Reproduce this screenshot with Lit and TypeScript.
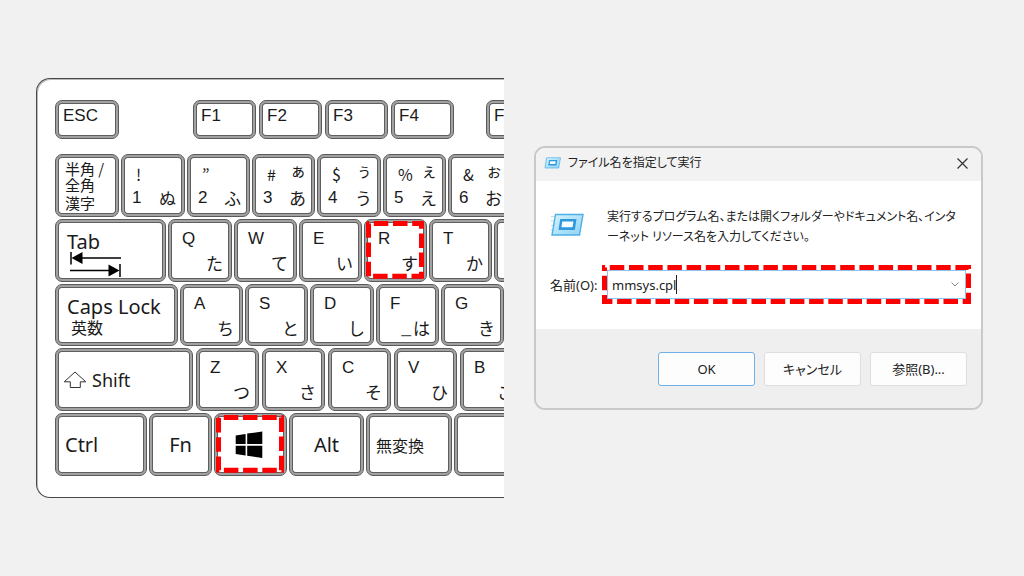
import { LitElement, html, svg, css, nothing } from "lit";
import { customElement, property, state } from "lit/decorators.js";
import { classMap } from "lit/directives/class-map.js";
import { styleMap } from "lit/directives/style-map.js";

interface Key {
  w: number;
  kind?: "space" | "fn" | "char" | "word" | "stack" | "tab" | "caps" | "shift" | "win" | "center";
  top?: string;
  topKana?: string;
  low?: string;
  kana?: string;
  marked?: boolean;
}

const gap = (w: number): Key => ({ w, kind: "space" });
const fn = (w: number, top: string): Key => ({ w, kind: "fn", top });
const num = (w: number, top: string, topKana: string, low: string, kana: string): Key => ({
  w, kind: "char", top, topKana, low, kana,
});
const letter = (w: number, top: string, kana: string, marked = false): Key => ({
  w, kind: "char", top, kana, marked,
});

const FUNCTION_ROW: Key[] = [
  fn(64, "ESC"), gap(68), fn(63, "F1"), fn(63, "F2"), fn(63, "F3"), fn(63, "F4"), gap(26), fn(63, "F5"),
];

const ROWS: { wide?: boolean; keys: Key[] }[] = [
  {
    keys: [
      { w: 64, kind: "stack" },
      num(64, "!", "", "1", "ぬ"),
      num(63, "”", "", "2", "ふ"),
      num(63, "#", "ぁ", "3", "あ"),
      num(64, "$", "ぅ", "4", "う"),
      num(63, "%", "ぇ", "5", "え"),
      num(63, "&", "ぉ", "6", "お"),
    ],
  },
  {
    keys: [
      { w: 111, kind: "tab", top: "Tab" },
      letter(64, "Q", "た"), letter(63, "W", "て"), letter(63, "E", "い"),
      letter(63, "R", "す", true), letter(63, "T", "か"), letter(63, "", ""),
    ],
  },
  {
    keys: [
      { w: 123, kind: "caps", top: "Caps Lock", low: "英数" },
      letter(63, "A", "ち"), letter(63, "S", "と"), letter(64, "D", "し"),
      { w: 63, kind: "char", top: "F", low: "_", kana: "は" },
      letter(63, "G", "き"),
    ],
  },
  {
    wide: true,
    keys: [
      { w: 138, kind: "shift", top: "Shift" },
      letter(63, "Z", "つ"), letter(63, "X", "さ"), letter(63, "C", "そ"),
      letter(63, "V", "ひ"), letter(63, "B", "こ"),
    ],
  },
  {
    keys: [
      { w: 92, kind: "word", top: "Ctrl" },
      { w: 63, kind: "center", top: "Fn" },
      { w: 73, kind: "win", marked: true },
      { w: 75, kind: "center", top: "Alt" },
      { w: 86, kind: "word", top: "無変換" },
      { w: 120, kind: "word", top: "" },
    ],
  },
];

const dashCss = css`
  .marker {
    position: absolute;
    pointer-events: none;
    overflow: visible;
  }
  .marker rect {
    x: 2.5px;
    y: 2.5px;
    width: calc(100% - 5px);
    height: calc(100% - 5px);
    fill: none;
    stroke: #ff0000;
    stroke-width: 5px;
    stroke-dasharray: 14.5 4.7;
    stroke-dashoffset: -5.3px;
  }
`;

@customElement("key-cap")
class KeyCap extends LitElement {
  @property({ attribute: false }) key!: Key;

  static styles = [
    dashCss,
    css`
      :host { display: block; flex: none; }
      .key {
        position: relative;
        display: block;
        box-sizing: border-box;
        height: 100%;
        border: 1px solid #5a5a5a;
        border-radius: 7px;
        background: #fff;
        box-shadow: inset 0 0 0 2px #a2a2a2, inset 0 0 0 3px #5f5f5f;
        color: #1a1a1a;
        font: 17px/20px "Liberation Sans", "Noto Sans CJK JP", sans-serif;
        overflow: hidden;
        white-space: nowrap;
      }
      .fn { padding: 5px 7px; }
      .char { padding: 9px 8px 0 13px; }
      .line { display: flex; justify-content: space-between; height: 20px; }
      .line + .line { margin-top: 4px; }
      .numeric { padding-left: 10px; }
      .symbol { padding-left: 4px; font: 16px/20px "Noto Sans CJK JP", sans-serif; }
      .small { font: 16px/12px "Noto Sans CJK JP", sans-serif; }
      .kana { margin-left: auto; font: 17px/20px "Noto Sans CJK JP", sans-serif; }
      .low-mark { margin-left: auto; color: #555; }
      .low-mark + .kana { margin-left: 2px; }
      .stack { padding: 6px 9px; font: 15px/16px "Noto Sans CJK JP", sans-serif; }
      .stack span { display: block; }
      .stack span:last-child { line-height: 20px; }
      .tab, .caps { padding: 12px 11px 0; }
      .big { display: block; font: 20px/20px "Noto Sans", "Noto Sans CJK JP", sans-serif; }
      .tab svg { display: block; margin-left: 3px; }
      .sub { display: block; padding-left: 4px; font: 16px/20px "Noto Sans CJK JP", sans-serif; }
      .shift, .word, .center, .win { display: flex; align-items: center; }
      .shift { padding-left: 7px; gap: 5px; font: 18px/20px "Noto Sans", sans-serif; }
      .word { padding-left: 9px; }
      .cjk { font: 16px/20px "Noto Sans CJK JP", sans-serif; }
      .center, .win { justify-content: center; }
      .win { padding-right: 3px; }
      .marker { top: 1px; left: 1px; width: calc(100% - 3px); height: calc(100% - 3px); }
    `,
  ];

  private body() {
    const k = this.key;
    switch (k.kind) {
      case "fn":
        return html`${k.top}`;
      case "stack":
        return html`<span>半角 /</span><span>全角</span><span>漢字</span>`;
      case "tab":
        return html`<span class="big">${k.top}</span>
          <svg width="52" height="26" viewBox="0 0 52 26" aria-hidden="true">
            <path d="M1 -0.500V12.500M50 12V25" stroke="#000" stroke-width="1.500" />
            <path d="M10 6H51M0 18.500H40" stroke="#000" stroke-width="1.700" />
            <path d="M1.500 6L12.500 0V12ZM49.500 18.500L38.500 12.500V24.500Z" fill="#000" />
          </svg>`;
      case "caps":
        return html`<span class="big">${k.top}</span><span class="sub">${k.low}</span>`;
      case "shift":
        return html`<svg width="24" height="18" viewBox="0 0 24 18" aria-hidden="true">
            <path d="M12 1L22.800 10.800H17.300V16.500H7.300V10.800H1.200Z" fill="none" stroke="#333" stroke-width="1" />
          </svg><span>${k.top}</span>`;
      case "win":
        return html`<svg width="28" height="28" viewBox="0 0 28 28" aria-label="Windows">
          <path
            d="M0.700 4.400L10.600 2.900V13H0.700ZM12.200 2.600L27.300 0.500V13H12.200ZM0.700 14.700H10.600V24.500L0.700 22.900ZM12.200 14.700H27.300V27L12.200 24.800Z"
            fill="#000" />
        </svg>`;
      case "word":
        return html`<span class=${/^[\x00-\x7f]*$/.test(k.top ?? "") ? "big" : "cjk"}>${k.top}</span>`;
      case "center":
        return html`<span class="big">${k.top}</span>`;
      default: {
        const numeric = k.topKana !== undefined;
        return html`
          <span class="line"><span class=${numeric ? "symbol" : ""}>${k.top}</span>
            ${k.topKana ? html`<span class="small">${k.topKana}</span>` : nothing}</span>
          <span class="line">${k.low
            ? html`<span class=${numeric ? "" : "low-mark"}>${k.low}</span>`
            : nothing}<span class="kana">${k.kana}</span></span>`;
      }
    }
  }

  render() {
    const k = this.key;
    const classes = { key: true, [k.kind ?? "char"]: true, numeric: k.topKana !== undefined };
    return html`<kbd class=${classMap(classes)}>${this.body()}${k.marked
      ? html`<svg class="marker">${svg`<rect />`}</svg>`
      : nothing}</kbd>`;
  }
}

@customElement("key-board")
class KeyBoard extends LitElement {
  static styles = css`
    :host { display: block; min-width: 0; }
    .board {
      box-sizing: border-box;
      padding: 21px 0 21px 18px;
      border: 1px solid #484848;
      border-right: 0;
      border-radius: 14px 0 0 14px;
      background: #fff;
      box-shadow: inset 1px 1px 0 #bbb;
      overflow: hidden;
    }
    .row { display: flex; gap: 2px; min-height: 0; }
    .functions { height: 39px; gap: 3px; margin-bottom: 15px; }
    .rows { display: grid; grid-template-rows: repeat(5, minmax(0, 1fr)); gap: 2px; height: 322px; }
    .wide { gap: 3px; }
    .space { flex: none; }
  `;

  private cap(k: Key) {
    const width = styleMap({ width: `${k.w}px` });
    return k.kind === "space"
      ? html`<span class="space" style=${width}></span>`
      : html`<key-cap .key=${k} style=${width}></key-cap>`;
  }

  render() {
    return html`<div class="board">
      <div class="row functions">${FUNCTION_ROW.map((k) => this.cap(k))}</div>
      <div class="rows">
        ${ROWS.map((r) => html`<div class=${classMap({ row: true, wide: !!r.wide })}>${r.keys.map((k) => this.cap(k))}</div>`)}
      </div>
    </div>`;
  }
}

@customElement("run-dialog")
class RunDialog extends LitElement {
  @state() private command = "mmsys.cpl";

  static styles = [
    dashCss,
    css`
      :host { display: block; min-width: 0; }
      .dialog {
        border: 2px solid #c9c9c9;
        border-radius: 11px;
        background: #fff;
        overflow: hidden;
        color: #222;
        font: 13px/20px "Noto Sans", "Noto Sans CJK JP", sans-serif;
        font-feature-settings: "palt";
      }
      .title {
        display: flex;
        align-items: center;
        box-sizing: border-box;
        height: 33px;
        padding: 0 13px 3px 8px;
        background: #f2f2f2;
      }
      .title h1 { flex: 1; margin: 0 0 0 7px; font-size: 12px; font-weight: 400; }
      button, input { font: inherit; color: inherit; font-feature-settings: inherit; }
      .close, .drop { display: flex; padding: 0; border: 0; background: none; }
      .content { padding: 26px 10px 25px 14px; }
      .message { display: flex; align-items: flex-start; gap: 23px; font-size: 12px; }
      .message svg { flex: none; margin-top: 6px; }
      .message p { margin: 0; white-space: nowrap; }
      .name { display: flex; align-items: center; margin-top: 18px; }
      .name label { flex: none; width: 52px; white-space: nowrap; }
      .wrap { position: relative; flex: 1; padding: 5px; }
      .combo {
        display: flex;
        align-items: center;
        box-sizing: border-box;
        height: 29px;
        padding: 0 6px 0 4px;
        border: 1px solid #8fc3ee;
        background: #fff;
      }
      .combo input { field-sizing: content; padding: 0; border: 0; outline: 0; background: none; }
      .caret { width: 1px; height: 19px; background: #222; }
      .drop { margin-left: auto; }
      .marker { inset: 0; width: 100%; height: 100%; }
      .actions { display: flex; justify-content: flex-end; gap: 9px; padding: 23px 14px 22px; background: #efefef; }
      .actions button {
        width: 97px;
        height: 34px;
        padding: 0;
        border: 1px solid #dedede;
        border-radius: 3px;
        background: #fdfdfd;
      }
      .actions .primary { border-color: #6fb1e6; }
    `,
  ];

  private icon(w: number, h: number) {
    return html`<svg width=${w} height=${h} viewBox="0 0 34 24" aria-hidden="true">
      <defs>
        <linearGradient id="g" x1="0" y1="0" x2="1" y2="1">
          <stop offset="0" stop-color="#d4f3fd" /><stop offset="1" stop-color="#8fd2f5" />
        </linearGradient>
      </defs>
      <path d="M1 3.500H7M0.500 8H6M1 12.500H5M0.500 17H4" stroke="#b4e0f5" stroke-width="1.200" />
      <path d="M5.500 1.500H33L29.500 22H2Z" fill="url(#g)" stroke="#4db0e6" stroke-width="1.400" />
      <path d="M10.200 6H26.500L24.800 17H8.500Z" fill="#2f97dd" />
      <path d="M12.300 8.600H23.400L22.600 14.200H11.400Z" fill="#f5fcff" />
    </svg>`;
  }

  render() {
    return html`<section class="dialog" role="dialog" aria-labelledby="t">
      <header class="title">
        ${this.icon(17, 12)}
        <h1 id="t">ファイル名を指定して実行</h1>
        <button class="close" aria-label="閉じる">
          <svg width="11" height="11" viewBox="0 0 11 11"><path d="M0.500 0.500L10.500 10.500M10.500 0.500L0.500 10.500" stroke="#333" stroke-width="1.200" /></svg>
        </button>
      </header>
      <div class="content">
        <div class="message">
          ${this.icon(34, 24)}
          <p>実行するプログラム名、または開くフォルダーやドキュメント名、インタ<br />ーネット リソース名を入力してください。</p>
        </div>
        <div class="name">
          <label for="cmd">名前(O):</label>
          <div class="wrap">
            <div class="combo">
              <input id="cmd" type="text" .value=${this.command}
                @input=${(e: Event) => (this.command = (e.target as HTMLInputElement).value)} />
              <span class="caret"></span>
              <button class="drop" aria-label="履歴">
                <svg width="8" height="5" viewBox="0 0 8 5"><path d="M0.500 0.500L4 4L7.500 0.500" fill="none" stroke="#888" stroke-width="1" /></svg>
              </button>
            </div>
            <svg class="marker"><rect /></svg>
          </div>
        </div>
      </div>
      <footer class="actions">
        <button class="primary">OK</button>
        <button>キャンセル</button>
        <button>参照(B)...</button>
      </footer>
    </section>`;
  }
}

@customElement("app-root")
class AppRoot extends LitElement {
  static styles = css`
    :host {
      display: flex;
      align-items: center;
      gap: 30px;
      box-sizing: border-box;
      min-height: 100vh;
      padding: 0 41px 0 36px;
      background: #f1f1f1;
      overflow: hidden;
    }
    .keyboard { flex: 468 1 0; }
    .dialog { flex: 449 1 0; margin-bottom: 20px; }
  `;

  render() {
    return html`<key-board class="keyboard"></key-board><run-dialog class="dialog"></run-dialog>`;
  }
}
